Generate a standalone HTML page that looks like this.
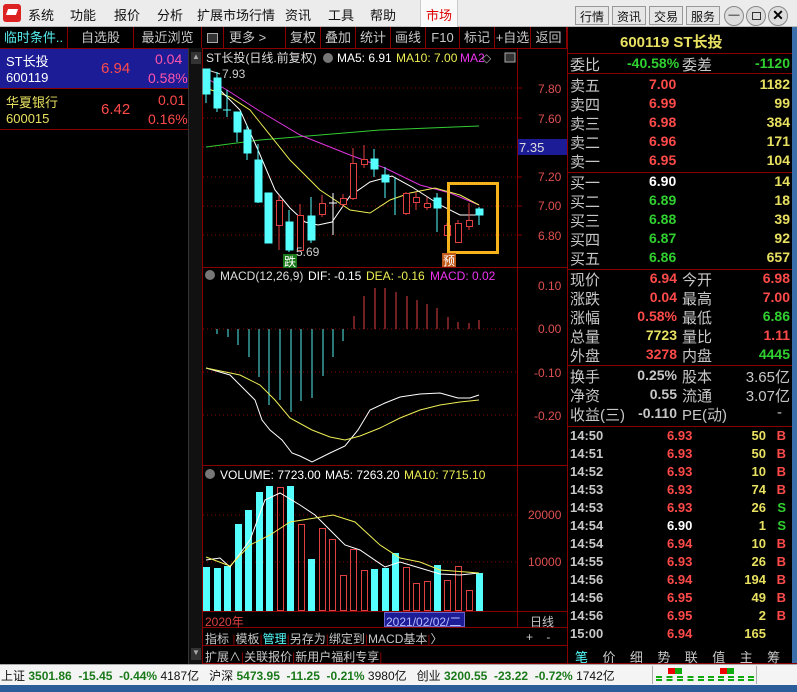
<!DOCTYPE html>
<html><head><meta charset="utf-8"><style>
*{margin:0;padding:0;box-sizing:border-box}
body{width:797px;height:692px;overflow:hidden;background:#000;font-family:"Liberation Sans","Noto Sans CJK SC",sans-serif;position:relative}
.a{position:absolute;white-space:nowrap}
.menu{left:0;top:0;width:797px;height:27px;background:#ececec;border-bottom:1px solid #bbb}
.mi{top:5px;font-size:13px;color:#111}
.tb{top:6px;height:19px;border:1px solid #999;background:#e6e6e6;font-size:12px;color:#111;padding:1px 4px}
.r{color:#ff4a4a}.g{color:#30d030}.y{color:#e8e060}.w{color:#fff}.gr{color:#c8c8c8}.c{color:#5ff}
.rp{left:567px;width:225px;font-size:14px}
.rp span{position:absolute}
.rp span.gr{font-size:15px}
.tab{top:27px;height:21px;font-size:13px;color:#c8c8c8;border-right:1px solid #800;text-align:center;line-height:21px}
.hl{background:#800;height:1px}
.bt{font-size:12px;color:#c8c8c8}
</style></head><body>
<div class="a menu"></div>
<div class="a" style="left:3px;top:4px;width:18px;height:18px;background:#d22;border-radius:3px"></div>
<div class="a" style="left:7px;top:9px;width:10px;height:6px;background:#fff;transform:skew(-20deg)"></div>
<div class="a mi" style="left:28px">系统</div><div class="a mi" style="left:70px">功能</div><div class="a mi" style="left:114px">报价</div><div class="a mi" style="left:157px">分析</div><div class="a mi" style="left:197px">扩展市场行情</div><div class="a mi" style="left:285px">资讯</div><div class="a mi" style="left:328px">工具</div><div class="a mi" style="left:370px">帮助</div>
<div class="a" style="left:420px;top:0;width:38px;height:27px;background:#fafafa;border-left:1px solid #ccc;border-right:1px solid #ccc"></div>
<div class="a mi" style="left:426px;color:#d00">市场</div>
<div class="a tb" style="left:575px">行情</div><div class="a tb" style="left:612px">资讯</div><div class="a tb" style="left:649px">交易</div><div class="a tb" style="left:686px">服务</div>
<div class="a" style="left:724px;top:6px;width:20px;height:20px;border:1px solid #888;border-radius:50%;background:#ddd;font-size:11px;text-align:center;line-height:16px">—</div>
<div class="a" style="left:746px;top:6px;width:20px;height:20px;border:1px solid #888;border-radius:50%;background:#ddd"><div class="a" style="left:5px;top:5px;width:9px;height:8px;border:1px solid #333"></div></div>
<div class="a" style="left:768px;top:6px;width:20px;height:20px;border:1px solid #888;border-radius:50%;background:#ddd;font-size:14px;text-align:center;line-height:17px;font-weight:bold">✕</div>
<div class="a" style="left:792px;top:27px;width:5px;height:637px;background:#3a6ea8"></div>

<div class="a tab" style="left:0;width:68px;color:#5ee">临时条件..</div>
<div class="a tab" style="left:68px;width:66px">自选股</div>
<div class="a tab" style="left:134px;width:68px">最近浏览</div>
<div class="a hl" style="left:0;top:48px;width:567px"></div>
<div class="a" style="left:0;top:49px;width:188px;height:39px;background:#1c1c96"></div>
<div class="a" style="left:6px;top:51px;font-size:13px;color:#fff">ST长投</div>
<div class="a" style="left:6px;top:70px;font-size:13px;color:#fff">600119</div>
<div class="a r" style="left:101px;top:60px;font-size:15px">6.94</div>
<div class="a" style="left:155px;top:51px;font-size:14px;color:#f5a">0.04</div>
<div class="a" style="left:148px;top:70px;font-size:14px;color:#f5a">0.58%</div>
<div class="a hl" style="left:0;top:88px;width:188px"></div>
<div class="a y" style="left:6px;top:92px;font-size:13px">华夏银行</div>
<div class="a y" style="left:6px;top:111px;font-size:13px">600015</div>
<div class="a r" style="left:101px;top:101px;font-size:15px">6.42</div>
<div class="a r" style="left:158px;top:92px;font-size:14px">0.01</div>
<div class="a r" style="left:148px;top:111px;font-size:14px">0.16%</div>
<div class="a hl" style="left:0;top:129px;width:188px"></div>
<div class="a" style="left:188px;top:48px;width:14px;height:616px;background:#111;border-left:1px solid #333"></div>
<div class="a" style="left:191px;top:52px;width:10px;height:12px;background:#333;color:#aaa;font-size:8px;text-align:center">▲</div>
<div class="a" style="left:191px;top:648px;width:10px;height:12px;background:#333;color:#aaa;font-size:8px;text-align:center">▼</div>

<div class="a tab" style="left:202px;width:22px"><div class="a" style="left:5px;top:6px;width:11px;height:10px;border:1px solid #aaa;background:#333"></div></div>
<div class="a tab" style="left:224px;width:62px;text-align:left;padding-left:5px">更多 &gt;</div>
<div class="a tab" style="left:286px;width:35px">复权</div><div class="a tab" style="left:321px;width:35px">叠加</div><div class="a tab" style="left:356px;width:35px">统计</div><div class="a tab" style="left:391px;width:35px">画线</div><div class="a tab" style="left:426px;width:34px">F10</div><div class="a tab" style="left:460px;width:35px">标记</div><div class="a tab" style="left:495px;width:36px">+自选</div><div class="a tab" style="left:531px;width:36px">返回</div>

<svg class="a" style="left:0;top:0" width="797" height="692" font-family="Liberation Sans" font-size="12">
<g stroke="#800" fill="none">
<line x1="202.5" y1="48" x2="202.5" y2="664"/><line x1="517.5" y1="48" x2="517.5" y2="628"/><line x1="567.5" y1="27" x2="567.5" y2="664"/>
<line x1="202" y1="267.5" x2="567" y2="267.5"/><line x1="202" y1="465.5" x2="567" y2="465.5"/><line x1="202" y1="611.5" x2="567" y2="611.5"/><line x1="202" y1="627.5" x2="567" y2="627.5"/><line x1="202" y1="645.5" x2="567" y2="645.5"/><line x1="202" y1="663.5" x2="797" y2="663.5"/>
</g>
<g stroke="#800" stroke-dasharray="1,3">
<line x1="203" y1="88" x2="517" y2="88"/><line x1="203" y1="118" x2="517" y2="118"/><line x1="203" y1="147" x2="517" y2="147"/><line x1="203" y1="177" x2="517" y2="177"/><line x1="203" y1="206" x2="517" y2="206"/><line x1="203" y1="235" x2="517" y2="235"/>
<line x1="203" y1="329" x2="517" y2="329"/><line x1="203" y1="372" x2="517" y2="372"/><line x1="203" y1="415" x2="517" y2="415"/>
<line x1="203" y1="515" x2="517" y2="515"/><line x1="203" y1="562" x2="517" y2="562"/>
</g>
<g fill="#e05050" font-size="12">
<text x="538" y="93">7.80</text><text x="538" y="123">7.60</text><text x="538" y="181">7.20</text><text x="538" y="210">7.00</text><text x="538" y="240">6.80</text>
<text x="538" y="290">0.10</text><text x="538" y="333">0.00</text><text x="534" y="377">-0.10</text><text x="534" y="420">-0.20</text>
<text x="528" y="519">20000</text><text x="528" y="566">10000</text>
</g>
<rect x="518" y="139" width="49" height="16" fill="#1c1c96"/><text x="519" y="152" fill="#ddd" font-size="13">7.35</text>
<g stroke="#800"><line x1="517" y1="88" x2="522" y2="88"/><line x1="517" y1="118" x2="522" y2="118"/><line x1="517" y1="177" x2="522" y2="177"/><line x1="517" y1="206" x2="522" y2="206"/><line x1="517" y1="235" x2="522" y2="235"/></g>
<text x="206" y="62" fill="#ddd" font-size="12">ST长投(日线.前复权)</text>
<circle cx="328" cy="58" r="5" fill="#777"/>
<text x="337" y="62" fill="#fff">MA5: 6.91</text><text x="396" y="62" fill="#ee5">MA10: 7.00</text><text x="460" y="62" fill="#e3e">MA2</text><text x="482" y="62" fill="#aaa">◇</text>
<rect x="505" y="53" width="10" height="9" fill="#333" stroke="#aaa"/>
<text x="222" y="78" fill="#ccc">7.93</text><line x1="208" y1="70" x2="220" y2="74" stroke="#ccc"/>
<polyline fill="none" stroke="#3c3" points="206,147 260,140 320,135 380,130 479,126"/>
<polyline fill="none" stroke="#d3d" points="206,78 227,90 258,110 300,135 350,155 385,168 420,185 450,193 479,205"/>
<polyline fill="none" stroke="#ee5" points="206,88 230,97 250,110 262,125 290,160 320,190 350,210 370,213 390,200 410,193 435,188 460,195 479,205"/>
<polyline fill="none" stroke="#fff" points="218,88 240,110 258,150 275,190 290,208 305,222 318,225 332,222 350,196 370,182 392,176 412,187 440,205 460,215 479,215"/>
<g stroke="#5ff" fill="#5ff">
<line x1="206" y1="69" x2="206" y2="103"/><rect x="203" y="69" width="7" height="25"/>
<line x1="217" y1="72" x2="217" y2="112"/><rect x="214" y="78" width="7" height="30"/>
<line x1="227" y1="90" x2="227" y2="117"/><line x1="223" y1="110" x2="231" y2="110"/>
<line x1="237" y1="112" x2="237" y2="142"/><rect x="234" y="112" width="7" height="20"/>
<line x1="247" y1="125" x2="247" y2="160"/><rect x="244" y="130" width="7" height="23"/>
<line x1="258" y1="144" x2="258" y2="203"/><rect x="255" y="160" width="7" height="42"/>
<rect x="265" y="193" width="7" height="50"/>
<line x1="289" y1="210" x2="289" y2="252"/><rect x="286" y="222" width="7" height="28"/>
<line x1="311" y1="197" x2="311" y2="243"/><rect x="308" y="216" width="7" height="24"/>
<line x1="374" y1="149" x2="374" y2="177"/><rect x="371" y="159" width="7" height="10"/>
<line x1="385" y1="167" x2="385" y2="198"/><rect x="382" y="175" width="7" height="7"/>
<line x1="395" y1="177" x2="395" y2="215"/>
<line x1="437" y1="193" x2="437" y2="232"/><rect x="434" y="198" width="7" height="10"/>
<line x1="479" y1="207" x2="479" y2="225"/><rect x="476" y="209" width="7" height="6"/>
</g>
<g stroke="#e04040" fill="#000">
<line x1="279" y1="195" x2="279" y2="250"/><rect x="276.5" y="200.5" width="6" height="25"/>
<line x1="300" y1="204" x2="300" y2="250"/><rect x="297.5" y="215.5" width="6" height="35"/>
<line x1="322" y1="195" x2="322" y2="217"/><rect x="319.5" y="203.5" width="6" height="11"/>
<line x1="343" y1="194" x2="343" y2="207"/><rect x="340.5" y="198.5" width="6" height="6"/>
<line x1="353" y1="148" x2="353" y2="200"/><rect x="350.5" y="163.5" width="6" height="35"/>
<line x1="364" y1="145" x2="364" y2="168"/><rect x="361.5" y="159.5" width="6" height="5"/>
<line x1="406" y1="192" x2="406" y2="215"/><rect x="403.5" y="193.5" width="6" height="20"/>
<line x1="416" y1="192" x2="416" y2="210"/><rect x="413.5" y="197.5" width="6" height="5"/>
<line x1="427" y1="197" x2="427" y2="210"/><rect x="424.5" y="203.5" width="6" height="4"/>
<line x1="447" y1="223" x2="447" y2="235"/><rect x="444.5" y="225.5" width="6" height="10"/>
<line x1="458" y1="220" x2="458" y2="243"/><rect x="455.5" y="223.5" width="6" height="19"/>
<line x1="469" y1="203" x2="469" y2="230"/><rect x="466.5" y="220.5" width="6" height="6"/>
</g>
<line x1="333" y1="193" x2="333" y2="235" stroke="#fff"/><line x1="329" y1="203" x2="337" y2="203" stroke="#fff"/>
<rect x="448.5" y="183.5" width="49" height="69" fill="none" stroke="#f5b21a" stroke-width="3"/>
<rect x="283" y="254" width="14" height="14" fill="#1a7a1a"/><text x="284" y="266" fill="#fff" font-size="12">跌</text>
<text x="296" y="256" fill="#ccc">5.69</text>
<rect x="442" y="253" width="14" height="14" fill="#c05a1a"/><text x="443" y="265" fill="#fff" font-size="12">预</text>
<circle cx="210" cy="275" r="5" fill="#777"/>
<text x="220" y="280" fill="#ddd">MACD(12,26,9)</text><text x="308" y="280" fill="#fff">DIF: -0.15</text><text x="366" y="280" fill="#ee5">DEA: -0.16</text><text x="430" y="280" fill="#e3e">MACD: 0.02</text>
<g stroke="#5ee">
<line x1="217" y1="329" x2="217" y2="334"/><line x1="228" y1="329" x2="228" y2="337"/><line x1="238" y1="329" x2="238" y2="345"/><line x1="249" y1="329" x2="249" y2="357"/><line x1="259" y1="329" x2="259" y2="377"/><line x1="269" y1="329" x2="269" y2="405"/><line x1="280" y1="329" x2="280" y2="400"/><line x1="291" y1="329" x2="291" y2="412"/><line x1="301" y1="329" x2="301" y2="401"/><line x1="312" y1="329" x2="312" y2="398"/><line x1="323" y1="329" x2="323" y2="376"/><line x1="333" y1="329" x2="333" y2="357"/><line x1="343" y1="329" x2="343" y2="341"/>
</g>
<g stroke="#e04040">
<line x1="354" y1="329" x2="354" y2="316"/><line x1="364" y1="329" x2="364" y2="296"/><line x1="375" y1="329" x2="375" y2="288"/><line x1="385" y1="329" x2="385" y2="288"/><line x1="396" y1="329" x2="396" y2="292"/><line x1="407" y1="329" x2="407" y2="296"/><line x1="417" y1="329" x2="417" y2="300"/><line x1="427" y1="329" x2="427" y2="304"/><line x1="437" y1="329" x2="437" y2="308"/><line x1="448" y1="329" x2="448" y2="317"/><line x1="458" y1="329" x2="458" y2="322"/><line x1="469" y1="329" x2="469" y2="323"/><line x1="479" y1="329" x2="479" y2="320"/>
</g>
<polyline fill="none" stroke="#fff" points="206,368 230,375 245,390 255,400 262,420 270,430 282,440 292,453 300,456 312,462 330,453 345,446 358,430 370,410 385,403 400,397 420,394 440,393 458,398 470,398 479,395"/>
<polyline fill="none" stroke="#ee5" points="206,368 240,375 260,385 275,400 290,418 312,430 330,437 345,440 360,436 380,428 400,418 420,410 440,405 460,402 479,400"/>
<circle cx="210" cy="474" r="5" fill="#777"/>
<text x="220" y="479" fill="#fff">VOLUME: 7723.00</text><text x="325" y="479" fill="#fff">MA5: 7263.20</text><text x="404" y="479" fill="#ee5">MA10: 7715.10</text>
<g fill="#5ff">
<rect x="203" y="567" width="7" height="44"/><rect x="214" y="568" width="7" height="43"/><rect x="224" y="566" width="7" height="45"/><rect x="235" y="524" width="7" height="87"/><rect x="245" y="510" width="7" height="101"/><rect x="256" y="492" width="7" height="119"/><rect x="266" y="486" width="7" height="125"/><rect x="287" y="486" width="7" height="125"/><rect x="308" y="559" width="7" height="52"/><rect x="371" y="569" width="7" height="42"/><rect x="382" y="568" width="7" height="43"/><rect x="392" y="553" width="7" height="58"/><rect x="434" y="565" width="7" height="46"/><rect x="476" y="573" width="7" height="38"/>
</g>
<g fill="none" stroke="#e04040">
<rect x="277.5" y="487.5" width="6" height="123"/><rect x="298.5" y="524.5" width="6" height="86"/><rect x="319.5" y="528.5" width="6" height="82"/><rect x="329.5" y="539.5" width="6" height="71"/><rect x="340.5" y="575.5" width="6" height="35"/><rect x="350.5" y="549.5" width="6" height="61"/><rect x="361.5" y="570.5" width="6" height="40"/><rect x="403.5" y="567.5" width="6" height="43"/><rect x="413.5" y="583.5" width="6" height="27"/><rect x="424.5" y="581.5" width="6" height="29"/><rect x="444.5" y="580.5" width="6" height="30"/><rect x="455.5" y="566.5" width="6" height="44"/><rect x="466.5" y="590.5" width="6" height="20"/>
</g>
<polyline fill="none" stroke="#fff" points="206,560 220,558 230,567 250,540 265,500 280,493 300,505 315,515 330,530 345,545 360,550 385,567 400,562 420,568 440,574 460,575 479,573"/>
<polyline fill="none" stroke="#ee5" points="206,557 230,566 250,545 270,535 290,522 315,518 333,515 355,522 380,545 400,558 420,562 440,570 479,573"/>
</svg>

<div class="a" style="left:205px;top:613px;font-size:12px;color:#e04040">2020年</div>
<div class="a" style="left:384px;top:612px;width:81px;height:15px;background:#1c1c96;border:1px solid #66c"></div>
<div class="a" style="left:386px;top:613px;font-size:12px;color:#bbf">2021/02/02/二</div>
<div class="a bt" style="left:530px;top:613px">日线</div>
<div class="a bt" style="left:205px;top:630px">指标 <span style="color:#800">|</span>模板<span style="color:#800">|</span><span class="c">管理</span><span style="color:#800">|</span>另存为<span style="color:#800">|</span>绑定到<span style="color:#800">|</span>MACD基本<span style="color:#800">|</span>〉</div>
<div class="a bt" style="left:526px;top:630px">+ &nbsp;&nbsp; -</div>
<div class="a bt" style="left:205px;top:648px">扩展∧<span style="color:#800">|</span>关联报价<span style="color:#800">|</span>新用户福利专享<span style="color:#800">|</span></div>
<div class="a" style="left:575px;top:647px;font-size:13px;color:#c8c8c8;word-spacing:0"><span class="c">笔</span>&nbsp;&nbsp;&nbsp;&nbsp;价&nbsp;&nbsp;&nbsp;&nbsp;细&nbsp;&nbsp;&nbsp;&nbsp;势&nbsp;&nbsp;&nbsp;&nbsp;联&nbsp;&nbsp;&nbsp;&nbsp;值&nbsp;&nbsp;&nbsp;&nbsp;主&nbsp;&nbsp;&nbsp;&nbsp;筹</div>

<div class="a y" style="left:620px;top:31px;font-size:15px;font-weight:bold">600119 ST长投</div>
<div class="a hl" style="left:567px;top:53px;width:225px"></div>
<div class="a hl" style="left:567px;top:73px;width:225px"></div>
<div class="a hl" style="left:567px;top:172px;width:225px"></div>
<div class="a hl" style="left:567px;top:269px;width:225px"></div>
<div class="a hl" style="left:567px;top:365px;width:225px"></div>
<div class="a hl" style="left:567px;top:426px;width:225px"></div>
<div class="a rp" style="top:0;height:660px">
<span class="gr" style="left:3px;top:54px">委比</span><span class="g" style="left:60px;top:55px;font-weight:bold">-40.58%</span><span class="gr" style="left:115px;top:54px">委差</span><span class="g" style="right:2px;top:55px;font-weight:bold">-1120</span>
<span class="gr" style="left:3px;top:75px">卖五</span><span class="r" style="left:82px;top:76px;font-weight:bold">7.00</span><span class="y" style="right:2px;top:76px;font-weight:bold">1182</span>
<span class="gr" style="left:3px;top:94px">卖四</span><span class="r" style="left:82px;top:95px;font-weight:bold">6.99</span><span class="y" style="right:2px;top:95px;font-weight:bold">99</span>
<span class="gr" style="left:3px;top:113px">卖三</span><span class="r" style="left:82px;top:114px;font-weight:bold">6.98</span><span class="y" style="right:2px;top:114px;font-weight:bold">384</span>
<span class="gr" style="left:3px;top:132px">卖二</span><span class="r" style="left:82px;top:133px;font-weight:bold">6.96</span><span class="y" style="right:2px;top:133px;font-weight:bold">171</span>
<span class="gr" style="left:3px;top:151px">卖一</span><span class="r" style="left:82px;top:152px;font-weight:bold">6.95</span><span class="y" style="right:2px;top:152px;font-weight:bold">104</span>
<span class="gr" style="left:3px;top:172px">买一</span><span class="w" style="left:82px;top:173px;font-weight:bold">6.90</span><span class="y" style="right:2px;top:173px;font-weight:bold">14</span>
<span class="gr" style="left:3px;top:191px">买二</span><span class="g" style="left:82px;top:192px;font-weight:bold">6.89</span><span class="y" style="right:2px;top:192px;font-weight:bold">18</span>
<span class="gr" style="left:3px;top:210px">买三</span><span class="g" style="left:82px;top:211px;font-weight:bold">6.88</span><span class="y" style="right:2px;top:211px;font-weight:bold">39</span>
<span class="gr" style="left:3px;top:229px">买四</span><span class="g" style="left:82px;top:230px;font-weight:bold">6.87</span><span class="y" style="right:2px;top:230px;font-weight:bold">92</span>
<span class="gr" style="left:3px;top:248px">买五</span><span class="g" style="left:82px;top:249px;font-weight:bold">6.86</span><span class="y" style="right:2px;top:249px;font-weight:bold">657</span>
<span class="gr" style="left:3px;top:269px">现价</span><span class="r" style="right:115px;top:270px;font-weight:bold">6.94</span><span class="gr" style="left:115px;top:269px">今开</span><span class="r" style="right:2px;top:270px;font-weight:bold">6.98</span>
<span class="gr" style="left:3px;top:288px">涨跌</span><span class="r" style="right:115px;top:289px;font-weight:bold">0.04</span><span class="gr" style="left:115px;top:288px">最高</span><span class="r" style="right:2px;top:289px;font-weight:bold">7.00</span>
<span class="gr" style="left:3px;top:307px">涨幅</span><span class="r" style="right:115px;top:308px;font-weight:bold">0.58%</span><span class="gr" style="left:115px;top:307px">最低</span><span class="g" style="right:2px;top:308px;font-weight:bold">6.86</span>
<span class="gr" style="left:3px;top:326px">总量</span><span class="y" style="right:115px;top:327px;font-weight:bold">7723</span><span class="gr" style="left:115px;top:326px">量比</span><span class="r" style="right:2px;top:327px;font-weight:bold">1.11</span>
<span class="gr" style="left:3px;top:345px">外盘</span><span class="r" style="right:115px;top:346px;font-weight:bold">3278</span><span class="gr" style="left:115px;top:345px">内盘</span><span class="g" style="right:2px;top:346px;font-weight:bold">4445</span>
<span class="gr" style="left:3px;top:366px">换手</span><span class="gr" style="right:115px;top:367px;font-weight:bold;font-size:14px">0.25%</span><span class="gr" style="left:115px;top:366px">股本</span><span class="gr" style="right:2px;top:366px">3.65亿</span>
<span class="gr" style="left:3px;top:385px">净资</span><span class="gr" style="right:115px;top:386px;font-weight:bold;font-size:14px">0.55</span><span class="gr" style="left:115px;top:385px">流通</span><span class="gr" style="right:2px;top:385px">3.07亿</span>
<span class="gr" style="left:3px;top:404px">收益(三)</span><span class="gr" style="right:115px;top:405px;font-weight:bold;font-size:14px">-0.110</span><span class="gr" style="left:115px;top:404px">PE(动)</span><span class="gr" style="right:10px;top:404px">-</span>
</div>
<div class="a rp" style="top:0;height:660px;font-weight:bold;font-size:13px">
<span class="gr" style="left:3px;top:428px;font-size:13px">14:50</span><span class="r" style="left:100px;top:428px">6.93</span><span class="y" style="right:26px;top:428px">50</span><span class="r" style="right:6px;top:428px">B</span>
<span class="gr" style="left:3px;top:446px;font-size:13px">14:51</span><span class="r" style="left:100px;top:446px">6.93</span><span class="y" style="right:26px;top:446px">50</span><span class="r" style="right:6px;top:446px">B</span>
<span class="gr" style="left:3px;top:464px;font-size:13px">14:52</span><span class="r" style="left:100px;top:464px">6.93</span><span class="y" style="right:26px;top:464px">10</span><span class="r" style="right:6px;top:464px">B</span>
<span class="gr" style="left:3px;top:482px;font-size:13px">14:53</span><span class="r" style="left:100px;top:482px">6.93</span><span class="y" style="right:26px;top:482px">74</span><span class="r" style="right:6px;top:482px">B</span>
<span class="gr" style="left:3px;top:500px;font-size:13px">14:53</span><span class="r" style="left:100px;top:500px">6.93</span><span class="y" style="right:26px;top:500px">26</span><span class="g" style="right:6px;top:500px">S</span>
<span class="gr" style="left:3px;top:518px;font-size:13px">14:54</span><span class="w" style="left:100px;top:518px">6.90</span><span class="y" style="right:26px;top:518px">1</span><span class="g" style="right:6px;top:518px">S</span>
<span class="gr" style="left:3px;top:536px;font-size:13px">14:54</span><span class="r" style="left:100px;top:536px">6.94</span><span class="y" style="right:26px;top:536px">10</span><span class="r" style="right:6px;top:536px">B</span>
<span class="gr" style="left:3px;top:554px;font-size:13px">14:55</span><span class="r" style="left:100px;top:554px">6.93</span><span class="y" style="right:26px;top:554px">26</span><span class="r" style="right:6px;top:554px">B</span>
<span class="gr" style="left:3px;top:572px;font-size:13px">14:56</span><span class="r" style="left:100px;top:572px">6.94</span><span class="y" style="right:26px;top:572px">194</span><span class="r" style="right:6px;top:572px">B</span>
<span class="gr" style="left:3px;top:590px;font-size:13px">14:56</span><span class="r" style="left:100px;top:590px">6.95</span><span class="y" style="right:26px;top:590px">49</span><span class="r" style="right:6px;top:590px">B</span>
<span class="gr" style="left:3px;top:608px;font-size:13px">14:56</span><span class="r" style="left:100px;top:608px">6.95</span><span class="y" style="right:26px;top:608px">2</span><span class="r" style="right:6px;top:608px">B</span>
<span class="gr" style="left:3px;top:626px;font-size:13px">15:00</span><span class="r" style="left:100px;top:626px">6.94</span><span class="y" style="right:26px;top:626px">165</span>
</div>

<div class="a" style="left:0;top:664px;width:797px;height:21px;background:#f4f4f4;border-top:1px solid #aaa"></div>
<div class="a" style="left:1px;top:667px;font-size:12px;color:#111">上证 <b style="color:#1a7a1a">3501.86 &nbsp;-15.45 &nbsp;-0.44%</b> 4187亿 &nbsp; 沪深 <b style="color:#1a7a1a">5473.95 &nbsp;-11.25 &nbsp;-0.21%</b> 3980亿 &nbsp; 创业 <b style="color:#1a7a1a">3200.55 &nbsp;-23.22 &nbsp;-0.72%</b> 1742亿</div>
<div class="a" style="left:652px;top:666px;width:105px;height:18px;border-left:1px solid #aaa;border-right:1px solid #aaa"></div>
<div class="a" style="left:668px;top:668px;width:7px;height:6px;background:#e00"></div><div class="a" style="left:675px;top:668px;width:7px;height:6px;background:#1a1"></div>
<div class="a" style="left:720px;top:668px;width:7px;height:6px;background:#e00"></div><div class="a" style="left:727px;top:668px;width:7px;height:6px;background:#1a1"></div>
<div class="a" style="left:656px;top:676px;width:48px;height:5px;border-top:2px dashed #1a1;border-bottom:2px dashed #1a1"></div>
<div class="a" style="left:708px;top:676px;width:46px;height:5px;border-top:2px dashed #1a1;border-bottom:2px dashed #1a1"></div>
<div class="a" style="left:0;top:685px;width:797px;height:7px;background:#2a5d9a"></div>
</body></html>
